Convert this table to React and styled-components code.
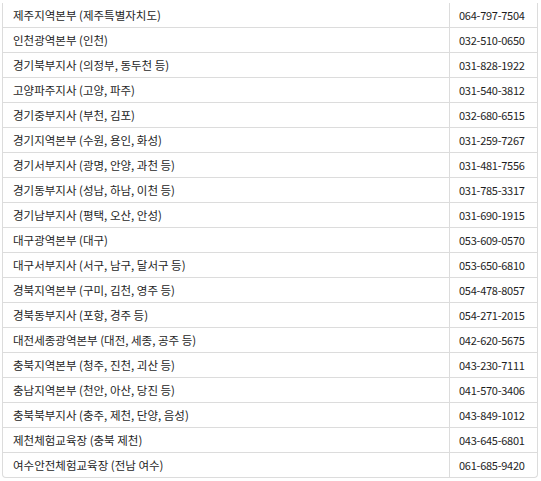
import React from "react";
import styled, { createGlobalStyle } from "styled-components";

const Global = createGlobalStyle`
  html, body { margin: 0; padding: 0; background: #fff; }
  body { font-family: "Noto Sans CJK KR", "Noto Sans", sans-serif; }
`;

const Wrap = styled.div`
  padding: 3px 3px 0 2px;
`;

const Table = styled.div`
  width: 536px;
  box-sizing: border-box;
  border: 1px solid #dcdcdc;
  border-top: none;
  border-radius: 0 0 4px 4px;
  display: grid;
  grid-template-columns: 446px 1fr;
  overflow: hidden;
`;

const Cell = styled.div`
  box-sizing: border-box;
  height: ${(p) => (p.$last ? "24px" : "25px")};
  border-bottom: ${(p) => (p.$last ? "none" : "1px solid #dcdcdc")};
  border-left: ${(p) => (p.$phone ? "1px solid #dcdcdc" : "none")};
  display: flex;
  align-items: center;
  padding-left: ${(p) => (p.$phone ? "9px" : "10px")};
  font-size: ${(p) => (p.$phone ? "11px" : "11.5px")};
  letter-spacing: ${(p) => (p.$phone ? "-0.25px" : "0")};
  color: #1e1e1e;
  white-space: nowrap;
`;

const rows = [
  ["제주지역본부 (제주특별자치도)", "064-797-7504"],
  ["인천광역본부 (인천)", "032-510-0650"],
  ["경기북부지사 (의정부, 동두천 등)", "031-828-1922"],
  ["고양파주지사 (고양, 파주)", "031-540-3812"],
  ["경기중부지사 (부천, 김포)", "032-680-6515"],
  ["경기지역본부 (수원, 용인, 화성)", "031-259-7267"],
  ["경기서부지사 (광명, 안양, 과천 등)", "031-481-7556"],
  ["경기동부지사 (성남, 하남, 이천 등)", "031-785-3317"],
  ["경기남부지사 (평택, 오산, 안성)", "031-690-1915"],
  ["대구광역본부 (대구)", "053-609-0570"],
  ["대구서부지사 (서구, 남구, 달서구 등)", "053-650-6810"],
  ["경북지역본부 (구미, 김천, 영주 등)", "054-478-8057"],
  ["경북동부지사 (포항, 경주 등)", "054-271-2015"],
  ["대전세종광역본부 (대전, 세종, 공주 등)", "042-620-5675"],
  ["충북지역본부 (청주, 진천, 괴산 등)", "043-230-7111"],
  ["충남지역본부 (천안, 아산, 당진 등)", "041-570-3406"],
  ["충북북부지사 (충주, 제천, 단양, 음성)", "043-849-1012"],
  ["제천체험교육장 (충북 제천)", "043-645-6801"],
  ["여수안전체험교육장 (전남 여수)", "061-685-9420"],
];

export default function App() {
  return (
    <>
      <Global />
      <Wrap>
        <Table>
          {rows.map(([name, phone], i) => {
            const last = i === rows.length - 1;
            return (
              <React.Fragment key={i}>
                <Cell $last={last}>{name}</Cell>
                <Cell $phone $last={last}>{phone}</Cell>
              </React.Fragment>
            );
          })}
        </Table>
      </Wrap>
    </>
  );
}
